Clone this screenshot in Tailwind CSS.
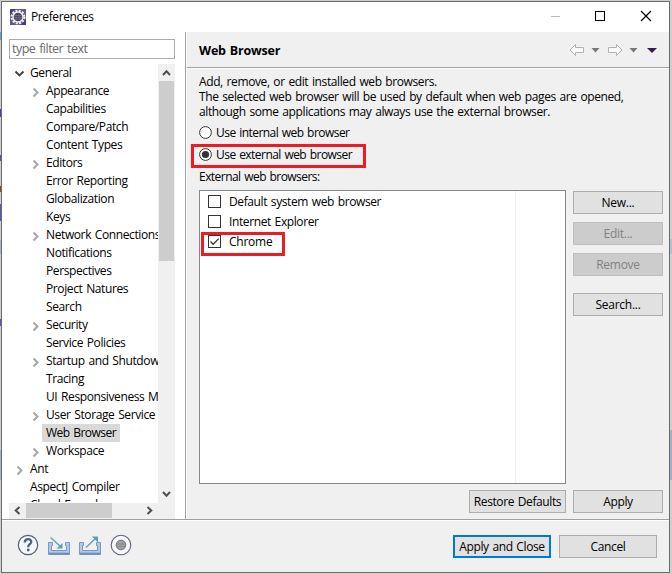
<!DOCTYPE html>
<html lang="en">
<head>
<meta charset="utf-8">
<title>Preferences</title>
<script src="https://cdn.jsdelivr.net/npm/@tailwindcss/browser@4"></script>
</head>
<body class="w-[672px] h-[574px] overflow-hidden bg-[#cfcfcf] font-['Open_Sans','Noto_Sans',sans-serif] text-[12px] text-black tracking-[-0.39px] [word-spacing:1px]">
<div class="relative w-[672px] h-[574px] pt-px pl-px">
  <div class="absolute left-0 top-[32px] w-px h-[8px] bg-[#5aa5dd]"></div>
  <div class="absolute left-0 top-[109px] w-px h-[8px] bg-[#4444bb]"></div>
  <div class="absolute left-0 top-[155px] w-px h-[6px] bg-[#5555bb]"></div>
  <div class="absolute left-0 top-[186px] w-px h-[6px] bg-[#805030]"></div>
  <div class="absolute left-0 top-[204px] w-px h-[17px] bg-[#5555cc]"></div>
  <div class="absolute left-0 top-[240px] w-px h-[14px] bg-[#a8b5c4]"></div>
  <div class="absolute left-0 top-[319px] w-px h-[7px] bg-[#5555cc]"></div>
  <div class="absolute left-0 top-[450px] w-px h-[30px] bg-[#a0b4d0]"></div>
  <div class="absolute left-[670px] top-[239px] w-[2px] h-[15px] bg-[#b3c2ce]"></div>
  <div class="absolute left-[670px] top-[430px] w-[2px] h-[50px] bg-[#a3b0be]"></div>

  <div class="w-[669px] h-[572px] border border-[#6c6c6c] bg-[#f0f0f0] flex flex-col overflow-hidden">
    <header class="h-[30px] shrink-0 bg-white flex items-center pl-[8px]">
      <svg class="size-4 shrink-0" viewBox="0 0 16 16"><rect width="16" height="16" fill="#66568f"/><path d="M0 0h5L0 6zM16 16h-5l5-6z" fill="#4b3a78"/><circle cx="8" cy="8" r="6.4" fill="none" stroke="#eeeef3" stroke-width="2" stroke-dasharray="2 1.35"/><circle cx="8" cy="8" r="5" fill="#4a4760" stroke="#f5f5f5" stroke-width="1.3"/><path d="M4.2 6.5h7.6M4 8.3h8M4.5 10h7" stroke="#77738d" stroke-width=".8"/></svg>
      <span class="ml-[5px] flex-1 whitespace-nowrap">Preferences</span>
      <svg class="w-[118px] h-[30px] shrink-0" viewBox="551 2 118 30" fill="none" stroke="#000"><path d="M551 16.5h9" stroke="#bbb"/><rect x="595.5" y="11.5" width="9" height="9" stroke-width="1.1"/><path d="M641 11l10 10M651 11l-10 10" stroke-width="1.15"/></svg>
    </header>

    <div class="flex h-[487px] shrink-0">
      <aside class="w-[183px] shrink-0 bg-white pl-[7px] pt-[7px]">
        <div class="w-[166px] h-[20px] border border-[#adadad] text-[#6b6b6b] flex items-center pl-[2px] text-[12.5px] whitespace-nowrap tracking-[-0.5px]">type filter text</div>
        <div class="mt-[5px] flex w-[166px] h-[439px]">
          <ul id="tree" class="w-[149px] h-[438px] overflow-hidden"></ul>
          <div class="w-[17px] pl-px h-[439px] bg-[#f0f0f0] flex flex-col">
            <svg class="w-4 h-[17px]" viewBox="0 0 16 17" fill="none" stroke="#505050" stroke-width="2"><path d="M4 11L7.500 7.2l3.500 3.8"/></svg>
            <div class="w-[15px] h-[180px] bg-[#cdcdcd]"></div>
            <svg class="mt-auto w-4 h-[17px]" viewBox="0 0 16 17" fill="none" stroke="#505050" stroke-width="2"><path d="M4 6l3.500 3.800L11 6"/></svg>
          </div>
        </div>
        <div class="w-[166px] h-[16px] bg-[#f0f0f0] flex">
          <svg class="w-[17px] h-[15px]" viewBox="0 0 17 15" fill="none" stroke="#505050" stroke-width="2"><path d="M10.500 3.900L6.700 7.500l3.800 3.600"/></svg>
          <div class="w-[86px] h-[15px] bg-[#cdcdcd]"></div>
          <svg class="ml-[29px] w-[17px] h-[15px]" viewBox="0 0 17 15" fill="none" stroke="#505050" stroke-width="2"><path d="M6.500 3.900l3.800 3.600-3.800 3.600"/></svg>
        </div>
      </aside>
      <div class="w-[2px] shrink-0 border-l border-[#a0a0a0] bg-white"></div>

      <main class="w-[482px] shrink-0">
        <div class="h-[36px] border-b border-[#a0a0a0] flex items-center">
          <h1 class="ml-[12px] pt-[4px] font-bold text-[12.5px] flex-1 whitespace-nowrap tracking-[-0.2px]">Web Browser</h1>
          <svg class="w-[102px] h-[20px]" viewBox="567 40 102 20"><g fill="#fafafa" stroke="#b0b0b0"><path d="M570 50l5.500-5.500v3h8v5h-8v3z"/><path d="M622 50l-5.500-5.500v3h-8v5h8v3z"/></g><path d="M591.500 48h8l-4 4.500zM629.500 48h8l-4 4.500z" fill="#777"/><path d="M647 48h10l-5 5z" fill="#301c50"/></svg>
        </div>
        <div class="border-t border-white pl-[12px] pt-[5px]">
          <div class="leading-[15px] whitespace-nowrap"><p>Add, remove, or edit installed web browsers.</p><p>The selected web browser will be used by default when web pages are opened,</p><p>although some applications may always use the external browser.</p></div>
          <div class="relative mt-px h-[72px] tracking-[-0.54px] whitespace-nowrap">
            <div class="flex items-center h-[22px] pt-[3px]"><svg class="size-[13px] mr-[4px]" viewBox="0 0 13 13"><circle cx="6.500" cy="6.500" r="5.900" fill="#fff" stroke="#333"/></svg><span>Use internal web browser</span></div>
            <div class="flex items-center h-[22px] pt-[3px]"><svg class="size-[13px] mr-[4px]" viewBox="0 0 13 13"><circle cx="6.500" cy="6.500" r="5.900" fill="#fff" stroke="#333"/><circle cx="6.500" cy="6.500" r="3.600" fill="#333"/></svg><span>Use external web browser</span></div>
            <div class="h-[22px] pt-[4px] leading-[18px]">External web browsers:</div>
            <div class="absolute -left-[8px] top-[24px] w-[175px] h-[24px] border-3 border-[#ed1c24]"></div>
          </div>
          <div class="flex -mt-[2px]">
            <div class="relative w-[367px] h-[294px] border border-[#828790] bg-white flex">
              <div class="w-[316px] h-[292px] border-r border-[#e5f1fb] pt-px pl-[8px]">
                <div class="h-5 flex items-center"><i class="size-[13px] border border-[#333] mr-[8px] mb-[2px]"></i>Default system web browser</div>
                <div class="h-5 flex items-center"><i class="size-[13px] border border-[#333] mr-[8px] mb-[2px]"></i>Internet Explorer</div>
                <div class="h-5 flex items-center tracking-[-0.25px]"><svg class="size-[13px] mr-[8px] mb-[2px]" viewBox="0 0 13 13" fill="none" stroke="#333"><rect x=".5" y=".5" width="12" height="12"/><path d="M2.500 6.500l2.700 2.800 5.500-5.700" stroke-width="1.300"/></svg>Chrome</div>
              </div>
              <div class="absolute left-px top-[41px] w-[84px] h-[24px] border-3 border-[#ed1c24]"></div>
            </div>
            <div class="ml-[7px] mt-px w-[90px] text-center leading-[21px] tracking-[-0.25px]">
              <div class="h-[23px] border border-[#adadad] bg-[#e1e1e1]">New...</div>
              <div class="h-[23px] mt-[8px] border border-[#bfbfbf] bg-[#ccc] text-[#838383]">Edit...</div>
              <div class="h-[23px] mt-[8px] border border-[#bfbfbf] bg-[#ccc] text-[#838383]">Remove</div>
              <div class="h-[23px] mt-[17px] border border-[#adadad] bg-[#e1e1e1]">Search...</div>
            </div>
          </div>
          <div class="flex mt-[6px] pl-[270px] gap-[7px] text-center leading-[21px] whitespace-nowrap">
            <div class="w-[97px] h-[23px] border border-[#adadad] bg-[#e1e1e1]">Restore Defaults</div>
            <div class="w-[90px] h-[23px] border border-[#adadad] bg-[#e1e1e1]">Apply</div>
          </div>
        </div>
      </main>
    </div>

    <footer class="flex-1 border-t border-[#a0a0a0] flex shadow-[inset_0_1px_0_#fff]">
      <svg class="w-[140px] h-[50px]" viewBox="2 520 140 50" fill="none">
        <circle cx="28" cy="545" r="9.700" fill="#f5f7fb" stroke="#53617d" stroke-width="1.200"/>
        <path d="M24.800 542.500c0-4.500 6.700-4.300 6.400-.5-.2 2.300-3 2.300-3 5.200" stroke="#4d6188" stroke-width="2.300"/><circle cx="28.200" cy="550" r="1.400" fill="#4d6188"/>
        <path d="M48.500 542.500h4v3h-1v5h15v-5h-1v-3h4v12h-21z" fill="#b4c8e6" stroke="#7896c6"/><path d="M49 553.500h20" stroke="#6c8dc2" stroke-width="1.600"/>
        <path d="M50.500 537.500l9.500 8.500" stroke="#5a9dbf" stroke-width="1.300"/><path d="M62.500 543v5.500h-6z" fill="#5a9dbf"/>
        <path d="M79.500 542.500h4v3h-1v5h15v-5h-1v-3h4v12h-21z" fill="#b4c8e6" stroke="#7896c6"/><path d="M80 553.500h20" stroke="#6c8dc2" stroke-width="1.600"/>
        <path d="M86 547.500l10-9.500" stroke="#5a9dbf" stroke-width="1.300"/><path d="M92 536.500h6v6z" fill="#5a9dbf"/>
        <circle cx="121" cy="545" r="9.800" fill="#f8f8fa" stroke="#59647b" stroke-width="1.100"/><circle cx="121" cy="545" r="4.800" fill="#a0a0a0" stroke="#777"/><path d="M117 544h8M117 546.500h8" stroke="#888" stroke-width=".8"/>
      </svg>
      <div class="ml-auto mr-[12px] mt-[15px] flex gap-[8px] text-center whitespace-nowrap">
        <div class="w-[98px] h-[23px] border-2 border-[#0078d7] bg-[#e1e1e1] leading-[19px]">Apply and Close</div>
        <div class="w-[98px] h-[23px] border border-[#adadad] bg-[#e1e1e1] leading-[21px]">Cancel</div>
      </div>
    </footer>
  </div>
</div>
<script>
const rows = [["General",0,"open"],["Appearance",1,"closed"],["Capabilities",1],["Compare/Patch",1],["Content Types",1],["Editors",1,"closed"],["Error Reporting",1],["Globalization",1],["Keys",1],["Network Connections",1,"closed"],["Notifications",1],["Perspectives",1],["Project Natures",1],["Search",1],["Security",1,"closed"],["Service Policies",1],["Startup and Shutdown",1,"closed"],["Tracing",1],["UI Responsiveness Monitoring",1],["User Storage Service",1,"closed"],["Web Browser",1],["Workspace",1,"closed"],["Ant",0,"closed"],["AspectJ Compiler",0],["Cloud Foundry",0]];
const arrow = {
  open: '<path d="M3.500 7.500l4 4 4-4" stroke="#404040" stroke-width="1.900"/>',
  closed: '<path d="M5.500 6.500l4 4-4 4" stroke="#a6a6a6" stroke-width="2"/>'
};
document.getElementById("tree").innerHTML = rows.map(([name, depth, state]) =>
  `<li class="h-[18px] flex items-center whitespace-nowrap ${depth ? "pl-[19px]" : "pl-[3px]"}"><svg class="w-[14px] h-[18px] shrink-0" viewBox="0 0 14 18" fill="none">${arrow[state] || ""}</svg><span class="leading-[18px] px-[4px] ${name === "Web Browser" ? "bg-[#d9d9d9] tracking-[-0.52px]" : ""}">${name}</span></li>`).join("");
</script>
</body>
</html>
